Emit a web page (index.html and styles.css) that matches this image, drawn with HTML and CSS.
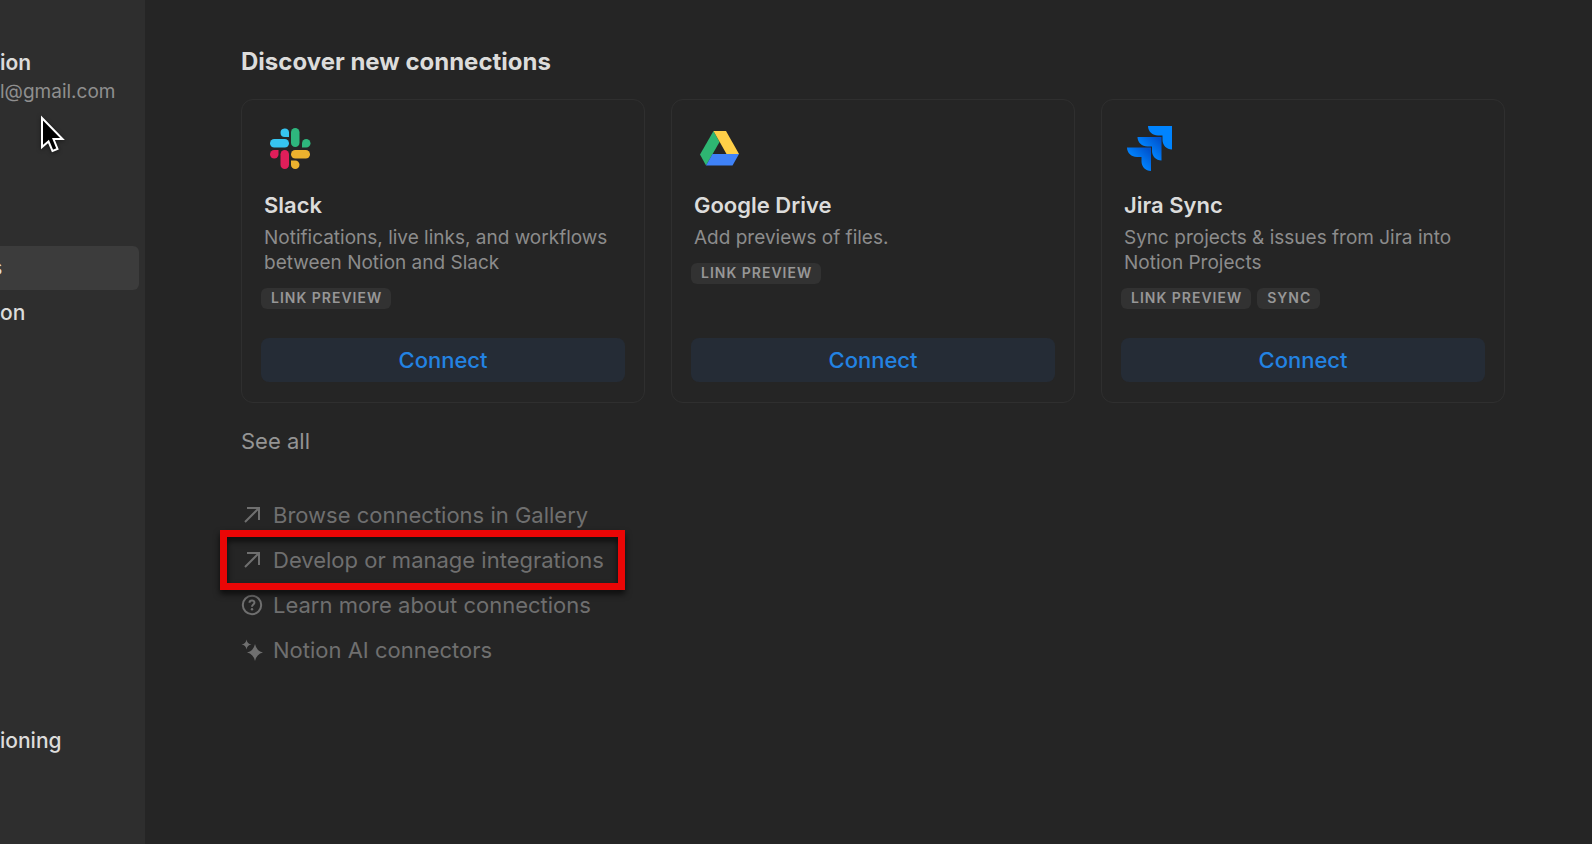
FILE: index.html
```html
<!DOCTYPE html>
<html lang="en">
<head>
<meta charset="utf-8">
<title>Connections</title>
<link rel="stylesheet" href="styles.css">
</head>
<body>
<div class="app">
  <aside class="sidebar">
    <div class="account">
      <div class="account-name">ion</div>
      <div class="account-mail">l@gmail.com</div>
    </div>
    <nav class="nav">
      <a class="nav-item selected" href="#"><span class="clipped">s</span></a>
      <a class="nav-item" href="#">on</a>
      <a class="nav-item later" href="#">ioning</a>
    </nav>
    <svg class="cursor" viewBox="0 0 26 40" width="26" height="40" aria-hidden="true">
      <path d="M2 3V32L8.500 26.500L12.500 36L17.500 34L13.500 24H22.500Z" fill="#000" stroke="#fff" stroke-width="2"/>
    </svg>
  </aside>

  <main class="main">
    <h1 class="heading">Discover new connections</h1>
    <div class="cards">
      <article class="card">
        <svg class="logo" viewBox="0 0 45 45" aria-hidden="true">
          <g fill="#36c5f0"><rect x="4" y="13" width="19" height="8.500" rx="4.250"/><path d="M23 11V6.250a4.250 4.250 0 1 0-4.250 4.750z"/></g>
          <g fill="#2eb67d"><rect x="25" y="2" width="8.500" height="19" rx="4.250"/><path d="M36 21V17.250a4.250 4.250 0 1 1 4.250 4.250H36z"/></g>
          <g fill="#ecb22e"><rect x="25" y="24" width="19" height="8.500" rx="4.250"/><path d="M25 34.500V38.750a4.250 4.250 0 1 0 4.250-4.250z"/></g>
          <g fill="#e01e5a"><rect x="14.500" y="24" width="8.500" height="19" rx="4.250"/><path d="M12.500 24V28.250a4.250 4.250 0 1 1-4.250-4.250z"/></g>
        </svg>
        <h2 class="card-title">Slack</h2>
        <p class="card-text">Notifications, live links, and workflows between Notion and Slack</p>
        <div class="tags"><span class="tag">LINK PREVIEW</span></div>
        <button class="connect" type="button">Connect</button>
      </article>

      <article class="card">
        <svg class="logo" viewBox="0 0 45 45" aria-hidden="true">
          <path fill="#2eb672" d="M17.500 5L23.500 16L10 39.500L4 28.500Z"/>
          <path fill="#ffcf48" d="M17.500 5H30L43 28H30.500Z"/>
          <path fill="#3f82f8" d="M16.500 28H43L36.500 39.500H10Z"/>
        </svg>
        <h2 class="card-title">Google Drive</h2>
        <p class="card-text">Add previews of files.</p>
        <div class="tags"><span class="tag">LINK PREVIEW</span></div>
        <button class="connect" type="button">Connect</button>
      </article>

      <article class="card">
        <svg class="logo" viewBox="-1 0 45 45" aria-hidden="true">
          <defs>
            <linearGradient id="jira-mid" x1="1" y1="0" x2="0.400" y2="0.600"><stop offset="0.150" stop-color="#0052cc"/><stop offset="1" stop-color="#0084ff"/></linearGradient>
          </defs>
          <path fill="#0084ff" d="M21 0H45V23.500C39.500 23.500 35.500 19 35.500 14V9.500H31C25.500 9.500 21 5.500 21 0Z"/>
          <path fill="url(#jira-mid)" d="M10.500 11H34.500V34.500C29 34.500 25 30 25 25V20.500H20.500C15 20.500 10.500 16.500 10.500 11Z"/>
          <path fill="url(#jira-mid)" d="M0 21.500H24V45C18.500 45 14.500 40.500 14.500 35.500V31H10C4.500 31 0 27 0 21.500Z"/>
        </svg>
        <h2 class="card-title">Jira Sync</h2>
        <p class="card-text">Sync projects &amp; issues from Jira into Notion Projects</p>
        <div class="tags"><span class="tag">LINK PREVIEW</span><span class="tag">SYNC</span></div>
        <button class="connect" type="button">Connect</button>
      </article>
    </div>

    <a class="see-all" href="#">See all</a>

    <ul class="links">
      <li><a class="link" href="#">
        <svg class="icon" viewBox="0 0 22 22" aria-hidden="true"><path class="line" d="M4 18L18 4M6 4H18V16"/></svg>
        Browse connections in Gallery</a></li>
      <li class="marked"><a class="link" href="#">
        <svg class="icon" viewBox="0 0 22 22" aria-hidden="true"><path class="line" d="M4 18L18 4M6 4H18V16"/></svg>
        Develop or manage integrations</a></li>
      <li><a class="link" href="#">
        <svg class="icon" viewBox="0 0 22 22" aria-hidden="true"><circle class="line" cx="11" cy="11" r="9.200"/><path class="line" d="M8.500 8.800C8.600 5.600 13.600 5.800 13.400 8.700C13.300 10.500 11 10.500 11 12.700"/><circle class="solid" cx="11" cy="15.300" r="1.200"/></svg>
        Learn more about connections</a></li>
      <li><a class="link" href="#">
        <svg class="icon" viewBox="0 0 22 22" aria-hidden="true"><path class="solid" d="M5.500 0.500Q6.200 4.800 10.500 5.500Q6.200 6.200 5.500 10.500Q4.800 6.200 0.500 5.500Q4.800 4.800 5.500 0.500ZM14 5Q15.500 12 22 13.500Q15.500 15 14 22Q12.500 15 6 13.500Q12.500 12 14 5Z"/></svg>
        Notion AI connectors</a></li>
    </ul>
  </main>
</div>
</body>
</html>
```

FILE: styles.css
```css
* {
  box-sizing: border-box;
}

body {
  margin: 0;
  background: #252525;
  color: #dcdcdb;
  font-family: Inter, "Liberation Sans", sans-serif;
  font-size: 22px;
  line-height: 28px;
}

a {
  color: inherit;
  text-decoration: none;
}

h1, h2, p, ul {
  margin: 0;
  padding: 0;
}

.app {
  display: flex;
  min-height: 100vh;
}

.sidebar {
  position: relative;
  flex: 0 0 145px;
  padding: 49px 6px 0 0;
  background: #2e2e2e;
  font-size: 21px;
  overflow: hidden;
}

.account-name {
  font-weight: 600;
}

.account-mail {
  color: #8f8f8f;
  font-size: 19px;
  line-height: 30px;
}

.nav {
  margin-top: 139px;
}

.nav-item {
  display: flex;
  align-items: center;
  height: 44px;
  margin-bottom: 1px;
  border-radius: 0 6px 6px 0;
  font-weight: 500;
}

.nav-item.selected {
  background: #3c3c3c;
}

.nav-item.later {
  margin-top: 384px;
}

.clipped {
  margin-left: -9px;
}

.cursor {
  position: absolute;
  left: 40px;
  top: 115px;
  filter: drop-shadow(0 1px 2px rgba(0, 0, 0, 0.5));
}

.main {
  flex: 1;
  padding: 44px 87px 40px 96px;
}

.heading {
  font-size: 24px;
  font-weight: 700;
  line-height: 36px;
}

.cards {
  display: grid;
  grid-template-columns: repeat(3, 1fr);
  gap: 26px;
  margin-top: 19px;
}

.card {
  display: flex;
  flex-direction: column;
  min-height: 304px;
  padding: 26px 19px 20px;
  border: 1px solid #2f2f2f;
  border-radius: 12px;
}

.logo {
  width: 45px;
  height: 45px;
  margin-left: 5px;
  overflow: visible;
}

.card-title {
  margin: 20px 3px 0;
  font-size: 22px;
  font-weight: 600;
  line-height: 28px;
}

.card-text {
  margin: 6px 3px 0;
  color: #8c8c8c;
  font-size: 19px;
  line-height: 25px;
}

.tags {
  display: flex;
  gap: 6px;
  margin-top: 13px;
}

.tag {
  padding: 0 9px 1px 10px;
  border-radius: 6px;
  background: #323232;
  color: #979797;
  font-size: 14px;
  font-weight: 600;
  letter-spacing: 1px;
  line-height: 20px;
}

.connect {
  height: 44px;
  margin-top: auto;
  border: 0;
  border-radius: 8px;
  background: #252c36;
  color: #2383e2;
  font: inherit;
  font-weight: 500;
}

.see-all {
  display: inline-block;
  margin-top: 24px;
  color: #949494;
}

.links {
  margin-top: 38px;
  list-style: none;
}

.link {
  display: flex;
  align-items: center;
  gap: 10px;
  height: 44px;
  margin-bottom: 1px;
  color: #6f6f6f;
}

.icon {
  width: 22px;
  height: 22px;
}

.line {
  fill: none;
  stroke: currentColor;
  stroke-width: 2;
}

.solid {
  fill: currentColor;
}

.marked {
  position: relative;
  width: max-content;
}

.marked::after {
  content: "";
  position: absolute;
  inset: -8px -21px;
  border: 7px solid #ea0606;
  filter: drop-shadow(0 4px 3px rgba(0, 0, 0, 0.7));
  pointer-events: none;
}
```
